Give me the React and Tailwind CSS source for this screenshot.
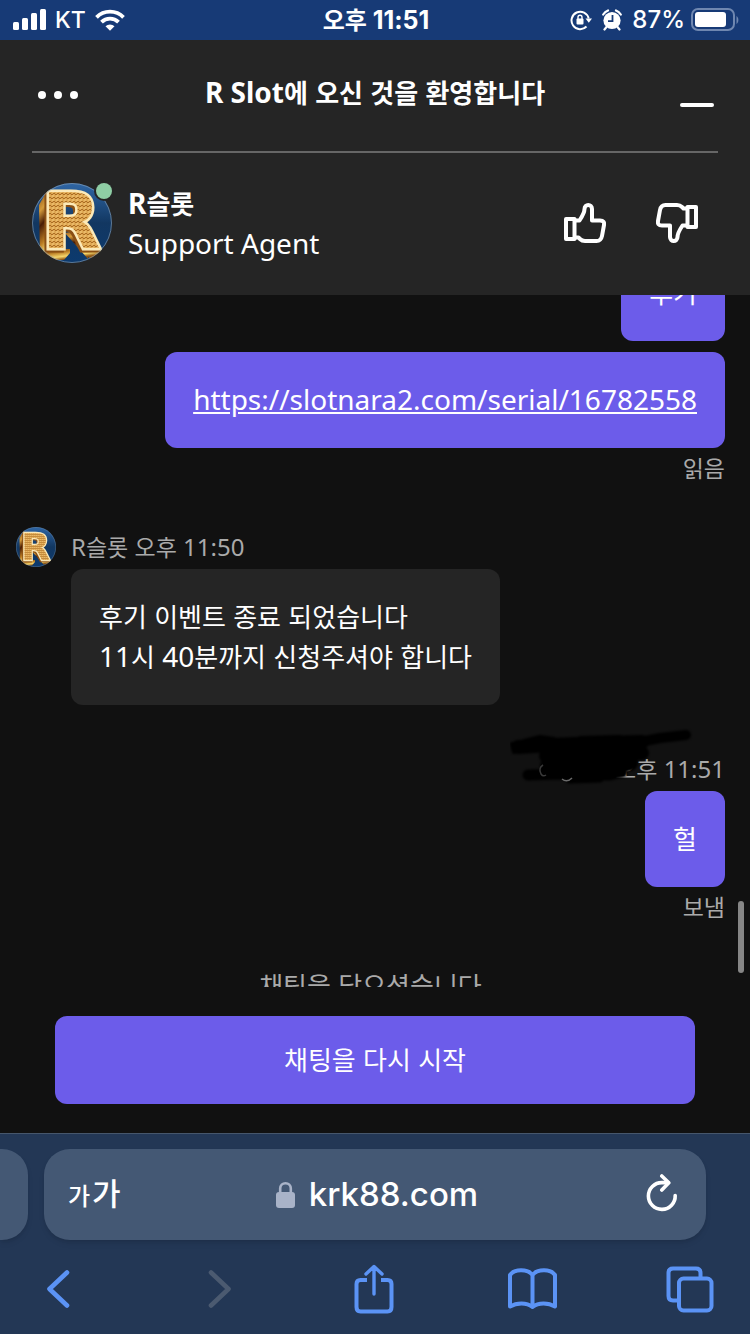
import React from "react";

// Hangul sits a touch smaller than the latin letters around it
const Mixed = ({ children, ko = "text-[26px]" }) =>
  children.split(/([가-힣]+)/).map((part, i) =>
    /[가-힣]/.test(part) ? (
      <span key={i} className={`${ko} leading-none`}>
        {part}
      </span>
    ) : (
      part
    )
  );

const Logo = ({ className }) => (
  <svg viewBox="0 0 80 80" className={className} aria-hidden="true">
    <defs>
      <clipPath id="logoClip">
        <circle cx="40" cy="40" r="40" />
      </clipPath>
      <linearGradient id="logoBg" x1="0" y1="0" x2="0" y2="1">
        <stop offset="0" stopColor="#2f66a5" />
        <stop offset="0.5" stopColor="#123761" />
        <stop offset="1" stopColor="#0c3a6e" />
      </linearGradient>
      <linearGradient id="logoSide" x1="0" y1="0" x2="0.3" y2="1">
        <stop offset="0" stopColor="#7a430f" />
        <stop offset="0.3" stopColor="#d49a3a" />
        <stop offset="0.5" stopColor="#4a1d05" />
        <stop offset="0.75" stopColor="#b87a22" />
        <stop offset="0.9" stopColor="#f6d66b" />
        <stop offset="1" stopColor="#8c5313" />
      </linearGradient>
      <pattern id="logoFace" width="4" height="4" patternUnits="userSpaceOnUse">
        <rect width="4" height="4" fill="#dfa853" />
        <path d="M0 4L2 2M2 2L4 4" stroke="#a5661f" strokeWidth="0.9" />
        <path d="M0 1h2" stroke="#f3cb7c" strokeWidth="1" />
      </pattern>
    </defs>
    <g clipPath="url(#logoClip)">
      <rect width="80" height="80" fill="url(#logoBg)" />
      {/* gilded side of the stem and the feet */}
      <path d="M7 22L16 6V68L26 68V76H8Z" fill="url(#logoSide)" />
      <path
        d="M16 66H38V70L32 77H8ZM52 66H74L70 75H57ZM33 50L44 48L56 68L56 76Z"
        fill="url(#logoSide)"
      />
      <text
        x="10"
        y="65"
        fontSize="76"
        className="fill-[url(#logoFace)] stroke-[#fbe9b8] stroke-[5px] font-['DejaVu_Sans',sans-serif] font-bold [filter:drop-shadow(-2px_2px_0px_#8a4f14)] [paint-order:stroke]"
      >
        R
      </text>
    </g>
    <circle cx="40" cy="40" r="39.5" fill="none" stroke="#8fa3b5" strokeOpacity="0.6" />
  </svg>
);

const Thumb = ({ className }) => (
  <svg width="42" height="40" viewBox="0 0 42 40" fill="none" stroke="currentColor" strokeWidth="4" strokeLinejoin="round" className={className}>
    <rect x="2" y="16" width="8.500" height="20" />
    <path d="M11 17.500H15.500C18.500 13 20.500 9.500 20.500 6C20.500 0.800 28 0.800 28 6V17.500H36C39.500 17.500 40.500 19.500 40 22L38 33C37.300 36.500 35.500 38 32.500 38H21C18.500 38 17.500 37.500 16 36L14.500 34.500H11" />
  </svg>
);

const Bubble = ({ children, className }) => (
  <div className={`rounded-xl px-7 pb-[29px] pt-[27px] text-[28px] leading-10 ${className}`}>
    {children}
  </div>
);

const StatusBar = () => (
  <div className="flex h-10 shrink-0 items-center bg-[#173a76] pl-[13px] pr-[11px] font-['Inter','Noto_Sans_CJK_KR',sans-serif] text-[23px] leading-10">
    <div className="flex flex-1 items-center gap-[9px]">
      <svg width="33" height="22" viewBox="0 0 33 22" fill="#fff">
        <rect x="0" y="13" width="6" height="8" rx="1.5" />
        <rect x="9" y="9" width="6" height="12" rx="1.5" />
        <rect x="18" y="4" width="6" height="17" rx="1.5" />
        <rect x="27" y="0" width="6" height="21" rx="1.5" />
      </svg>
      <span className="font-medium">KT</span>
      <svg width="30" height="22" viewBox="0 0 30 22">
        <g fill="none" stroke="#fff" strokeWidth="3.800">
          <path d="M1.500 8.300A19 19 0 0 1 28.500 8.300" />
          <path d="M6.500 13.200A12 12 0 0 1 23.500 13.200" />
        </g>
        <path d="M15 21.800L10.500 17.300A6.500 6.500 0 0 1 19.500 17.300Z" fill="#fff" />
      </svg>
    </div>
    <span className="text-[25px] font-bold">
      <Mixed ko="text-[24px]">오후 11:51</Mixed>
    </span>
    <div className="flex flex-1 items-center justify-end">
      <svg width="22" height="22" viewBox="0 0 22 22" fill="none" stroke="#fff" strokeWidth="2">
        <path d="M16.500 17.500A8.700 8.700 0 1 1 18.700 9.500" />
        <path d="M15.500 9.500h6.500l-3.200 4.200z" fill="#fff" stroke="none" />
        <rect x="6.500" y="9.500" width="7" height="6" rx="1" fill="#fff" stroke="none" />
        <path d="M8 10V8.200a2 2 0 0 1 4 0V10" strokeWidth="1.400" />
      </svg>
      <svg width="20" height="22" viewBox="0 0 20 22" className="ml-[10px]">
        <circle cx="10" cy="11.500" r="8.600" fill="#fff" />
        <path d="M1.200 5.500A10 10 0 0 1 6 1.500M18.800 5.500A10 10 0 0 0 14 1.500M4.500 18L2.500 20.500M15.500 18L17.500 20.500" stroke="#fff" strokeWidth="2.200" fill="none" strokeLinecap="round" />
        <path d="M10.500 6V12.200H6" fill="none" stroke="#173a76" strokeWidth="1.800" />
      </svg>
      <span className="ml-[10px] text-[24px] font-medium">87%</span>
      <svg width="48" height="24" viewBox="0 0 48 24" className="ml-[6px]">
        <rect x="1" y="1" width="42" height="21" rx="6" fill="none" stroke="#6f87b0" strokeWidth="2" />
        <rect x="4" y="4" width="31" height="15" rx="3" fill="#fff" />
        <path d="M45.500 8v8c2.500-1.500 2.500-6.500 0-8z" fill="#6f87b0" />
      </svg>
    </div>
  </div>
);

const Header = () => (
  <header className="shrink-0 bg-[#252525] px-8">
    <div className="flex h-[113px] items-center justify-between border-b-2 border-[#666] pb-[2px]">
      <button type="button" aria-label="메뉴" className="flex w-[52px] justify-center gap-2">
        <span className="size-2 rounded-full bg-white" />
        <span className="size-2 rounded-full bg-white" />
        <span className="size-2 rounded-full bg-white" />
      </button>
      <h1 className="pb-[6px] text-[28px] font-bold leading-10">
        <Mixed>R Slot에 오신 것을 환영합니다</Mixed>
      </h1>
      <button type="button" aria-label="최소화" className="flex h-6 w-[52px] items-end justify-center pl-[10px]">
        <span className="h-1 w-[34px] rounded-full bg-white" />
      </button>
    </div>
    <div className="flex items-center pb-8 pt-[30px]">
      <div className="relative size-20">
        <Logo className="size-20" />
        <span className="absolute right-0 top-0 size-4 rounded-full bg-[#8fcea5] ring-2 ring-[#252525]" />
      </div>
      <div className="ml-4 flex-1 text-[28px] leading-10">
        <p className="font-bold">
          <Mixed>R슬롯</Mixed>
        </p>
        <p>Support Agent</p>
      </div>
      <button type="button" aria-label="좋아요" className="mr-[50px]">
        <Thumb />
      </button>
      <button type="button" aria-label="싫어요" className="mr-5">
        <Thumb className="rotate-180" />
      </button>
    </div>
  </header>
);

// hides the sender's name
const Scribble = () => (
  <svg width="184" height="58" viewBox="0 0 184 58" className="absolute -top-[18px] right-[31px]" aria-hidden="true">
    <g fill="none" stroke="#000" strokeLinecap="round" strokeLinejoin="round" className="blur-[1px]">
      <path d="M8 19L40 17L90 15L132 14" strokeWidth="14" />
      <path d="M130 14L150 10L176 7" strokeWidth="10" />
      <path d="M36 28L60 26L100 26L132 25" strokeWidth="14" />
      <path d="M38 38L70 36L120 35" strokeWidth="16" />
      <path d="M18 47L50 46L100 47L112 44" strokeWidth="11" />
      <path d="M60 51L90 50" strokeWidth="9" />
      <path d="M14 13L30 9L44 11M70 10L110 9M2 16L4 24" strokeWidth="4" />
    </g>
    <g fill="none" strokeWidth="1.500">
      <path d="M33 37q-5 3-2 9q2 3 5 1" stroke="#3a3a3a" />
      <path d="M52 51q5 4 10-1" stroke="#6a6a6a" />
    </g>
  </svg>
);

const Chat = () => (
  <main className="relative min-h-0 flex-1 overflow-hidden bg-[#111]">
    <div className="-mt-[50px] flex flex-col pl-4 pr-[25px] text-[24px]">
      <Bubble className="self-end bg-[#6c5cea]">
        <Mixed>후기</Mixed>
      </Bubble>
      <Bubble className="mt-[11px] self-end bg-[#6c5cea]">
        <a href="https://slotnara2.com/serial/16782558" className="underline">
          https://slotnara2.com/serial/16782558
        </a>
      </Bubble>
      <p className="self-end leading-10 text-[#aaa]">
        <Mixed ko="text-[23px]">읽음</Mixed>
      </p>

      <div className="mt-9 flex items-center">
        <Logo className="size-10" />
        <p className="ml-[15px] leading-[45px] text-[#aaa]">
          <Mixed ko="text-[23px]">R슬롯 오후 11:50</Mixed>
        </p>
      </div>
      <Bubble className="ml-[55px] self-start bg-[#252525]">
        <p>
          <Mixed>후기 이벤트 종료 되었습니다</Mixed>
        </p>
        <p>
          <Mixed>11시 40분까지 신청주셔야 합니다</Mixed>
        </p>
      </Bubble>

      <div className="relative mt-[41px] self-end">
        <p className="leading-[45px] text-[#aaa]">
          <Mixed ko="text-[23px]">오후 11:51</Mixed>
        </p>
        <Scribble />
      </div>
      <Bubble className="self-end bg-[#6c5cea]">
        <Mixed>헐</Mixed>
      </Bubble>
      <p className="self-end leading-10 text-[#aaa]">
        <Mixed ko="text-[23px]">보냄</Mixed>
      </p>
      <p className="mt-[38px] text-center text-[28px] leading-10 text-[#aaa]">
        <Mixed>채팅을 닫으셨습니다</Mixed>
      </p>
    </div>
    {/* scroll thumb */}
    <div className="absolute bottom-[14px] right-[6px] h-[72px] w-[6px] rounded-full bg-[#868686]" />
  </main>
);

const BrowserBar = () => (
  <footer className="shrink-0 border-t border-[#46566b] bg-[#233755] pt-[15px] font-['Inter','Noto_Sans_CJK_KR',sans-serif]">
    <div className="flex h-[91px] gap-4 pr-11">
      <div className="w-7 rounded-r-[26px] bg-[#445874] shadow-md" />
      <div className="grid flex-1 grid-cols-[1fr_auto_1fr] items-center rounded-[26px] bg-[#445874] px-6 shadow-md">
        <button type="button" className="flex items-baseline gap-[2px] font-medium">
          <span className="text-[24px]">가</span>
          <span className="text-[31px]">가</span>
        </button>
        <div className="flex items-center gap-[14px] pl-1">
          <svg width="19" height="27" viewBox="0 0 19 27">
            <rect y="11" width="19" height="16" rx="3" fill="#a9b3c8" />
            <path d="M4.200 12V7.500a5.300 5.300 0 0 1 10.600 0V12" fill="none" stroke="#a9b3c8" strokeWidth="2.600" />
          </svg>
          <span className="text-[33px] font-medium">krk88.com</span>
        </div>
        <button type="button" aria-label="새로고침" className="mr-1 justify-self-end">
          <svg width="32" height="42" viewBox="0 0 32 42" fill="none" stroke="#fff" strokeWidth="3.600" strokeLinecap="round" strokeLinejoin="round">
            <path d="M29.200 21.500A13.400 13.400 0 1 1 16 8.600H22" />
            <path d="M15.800 2L22.800 8.700L15.800 16" />
          </svg>
        </button>
      </div>
    </div>
    <nav className="flex h-[94px] items-center justify-between pb-[2px] pl-[34px] pr-[36px] pt-[6px] text-[#5b93f5]">
      <button type="button" aria-label="뒤로" className="flex w-12 justify-center">
        <svg width="24" height="40" viewBox="0 0 24 40" fill="none" stroke="currentColor" strokeWidth="4.600" strokeLinecap="round" strokeLinejoin="round">
          <path d="M21 3.500L3.500 20L21 36.500" />
        </svg>
      </button>
      <button type="button" aria-label="앞으로" className="flex w-12 justify-end pr-2 text-[#4b5a70]" disabled>
        <svg width="24" height="40" viewBox="0 0 24 40" fill="none" stroke="currentColor" strokeWidth="4.600" strokeLinecap="round" strokeLinejoin="round">
          <path d="M3 3.500L20.500 20L3 36.500" />
        </svg>
      </button>
      <button type="button" aria-label="공유" className="flex w-12 justify-center">
        <svg width="40" height="50" viewBox="0 0 40 50" fill="none" stroke="currentColor" strokeWidth="4" strokeLinecap="round" strokeLinejoin="round">
          <path d="M13 16H6.500Q2.500 16 2.500 20V43Q2.500 47.500 6.500 47.500H33.500Q37.500 47.500 37.500 43V20Q37.500 16 33.500 16H27" strokeLinecap="butt" />
          <path d="M20 30V3M12 10L20 2.500L28 10" strokeWidth="3.400" />
        </svg>
      </button>
      <button type="button" aria-label="책갈피" className="flex w-12 justify-center">
        <svg width="49" height="42" viewBox="0 0 49 42" fill="none" stroke="currentColor" strokeWidth="4" strokeLinecap="round" strokeLinejoin="round" className="shrink-0">
          <path d="M24.500 7C20 1 6.500 0.500 2 7V38.500C8.500 34.500 18.500 34 24.500 39C30.500 34 40.500 34.500 47 38.500V7C42.500 0.500 29 1 24.500 7ZM24.500 7V39" />
        </svg>
      </button>
      <button type="button" aria-label="탭" className="flex w-12 justify-center">
        <svg width="48" height="47" viewBox="0 0 48 47" fill="none" stroke="currentColor" strokeWidth="4">
          <path d="M12 34.500H7Q2.500 34.500 2.500 30V7Q2.500 2.500 7 2.500H30Q34.500 2.500 34.500 7V12" />
          <rect x="13" y="12.500" width="32.500" height="32" rx="4.500" />
        </svg>
      </button>
    </nav>
  </footer>
);

export default function App() {
  return (
    <div className="flex h-screen flex-col bg-[#111] font-['Noto_Sans','Noto_Sans_CJK_KR',sans-serif] text-white">
      <StatusBar />
      <Header />
      <Chat />
      <div className="flex shrink-0 px-[55px] py-[29px]">
        <button type="button" className="h-[88px] flex-1 rounded-xl bg-[#6c5cea] pb-[2px] text-[28px]">
          <Mixed>채팅을 다시 시작</Mixed>
        </button>
      </div>
      <BrowserBar />
    </div>
  );
}
